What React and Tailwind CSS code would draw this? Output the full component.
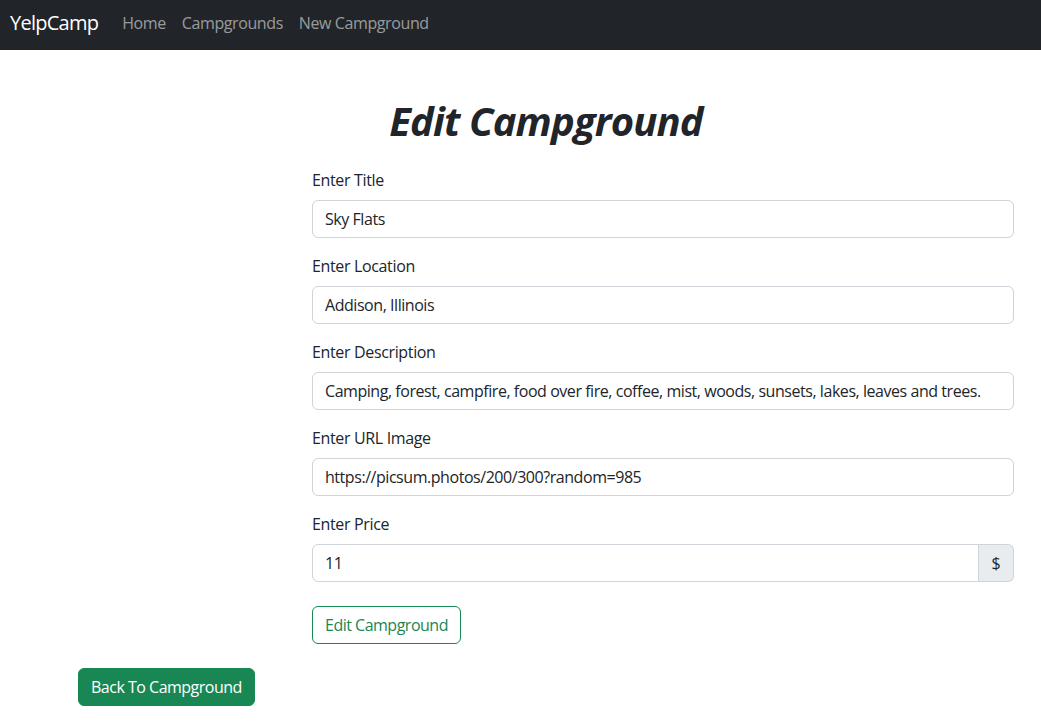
import React from "react";

function Field({ label, value }) {
  return (
    <div className="mb-4">
      <label className="block text-[16px] leading-[24px] mb-2 text-[#212529]">{label}</label>
      <input
        readOnly
        value={value}
        className="block w-full h-[38px] px-3 border border-[#ced4da] rounded-[6px] text-[16px] tracking-[-0.45px] text-[#212529] bg-white outline-none"
      />
    </div>
  );
}

export default function App() {
  return (
    <div className="min-h-[723px] bg-white text-[#212529] tracking-[-0.35px] font-['Open_Sans','Noto_Sans',sans-serif]">
      <nav className="h-[50px] bg-[#212529] flex items-center pl-[10px] pb-[5px]">
        <span className="text-white text-[20px] leading-[30px] tracking-[-0.75px] mr-4">YelpCamp</span>
        <div className="flex">
          <span className="px-2 text-[16px] tracking-[-0.4px] text-[rgba(255,255,255,0.55)]">Home</span>
          <span className="px-2 text-[16px] tracking-[-0.4px] text-[rgba(255,255,255,0.55)]">Campgrounds</span>
          <span className="px-2 text-[16px] tracking-[-0.4px] text-[rgba(255,255,255,0.55)]">New Campground</span>
        </div>
      </nav>
      <main className="pl-[312px] pr-[27px]">
        <h1 className="w-[468px] text-center text-[40px] leading-[48px] font-bold italic tracking-[-0.85px] mt-[47px] mb-[23px]">
          Edit Campground
        </h1>
        <form>
          <Field label="Enter Title" value="Sky Flats" />
          <Field label="Enter Location" value="Addison, Illinois" />
          <Field
            label="Enter Description"
            value="Camping, forest, campfire, food over fire, coffee, mist, woods, sunsets, lakes, leaves and trees."
          />
          <Field label="Enter URL Image" value="https://picsum.photos/200/300?random=985" />
          <div className="mb-4">
            <label className="block text-[16px] leading-[24px] mb-2">Enter Price</label>
            <div className="flex h-[38px]">
              <input
                readOnly
                value="11"
                className="flex-1 min-w-0 px-3 border border-[#ced4da] rounded-l-[6px] text-[16px] tracking-[-0.45px] text-[#212529] outline-none"
              />
              <span className="w-[35px] flex items-center justify-center bg-[#e9ecef] border border-l-0 border-[#ced4da] rounded-r-[6px] text-[16px]">
                $
              </span>
            </div>
          </div>
          <button
            type="button"
            className="mt-2 h-[38px] px-3 border border-[#198754] text-[#198754] rounded-[6px] text-[16px] tracking-[-0.5px] bg-white"
          >
            Edit Campground
          </button>
        </form>
      </main>
      <div className="pl-[78px] mt-6">
        <button
          type="button"
          className="h-[38px] px-3 border border-[#198754] bg-[#198754] text-white rounded-[6px] text-[16px] tracking-[-0.5px]"
        >
          Back To Campground
        </button>
      </div>
    </div>
  );
}
